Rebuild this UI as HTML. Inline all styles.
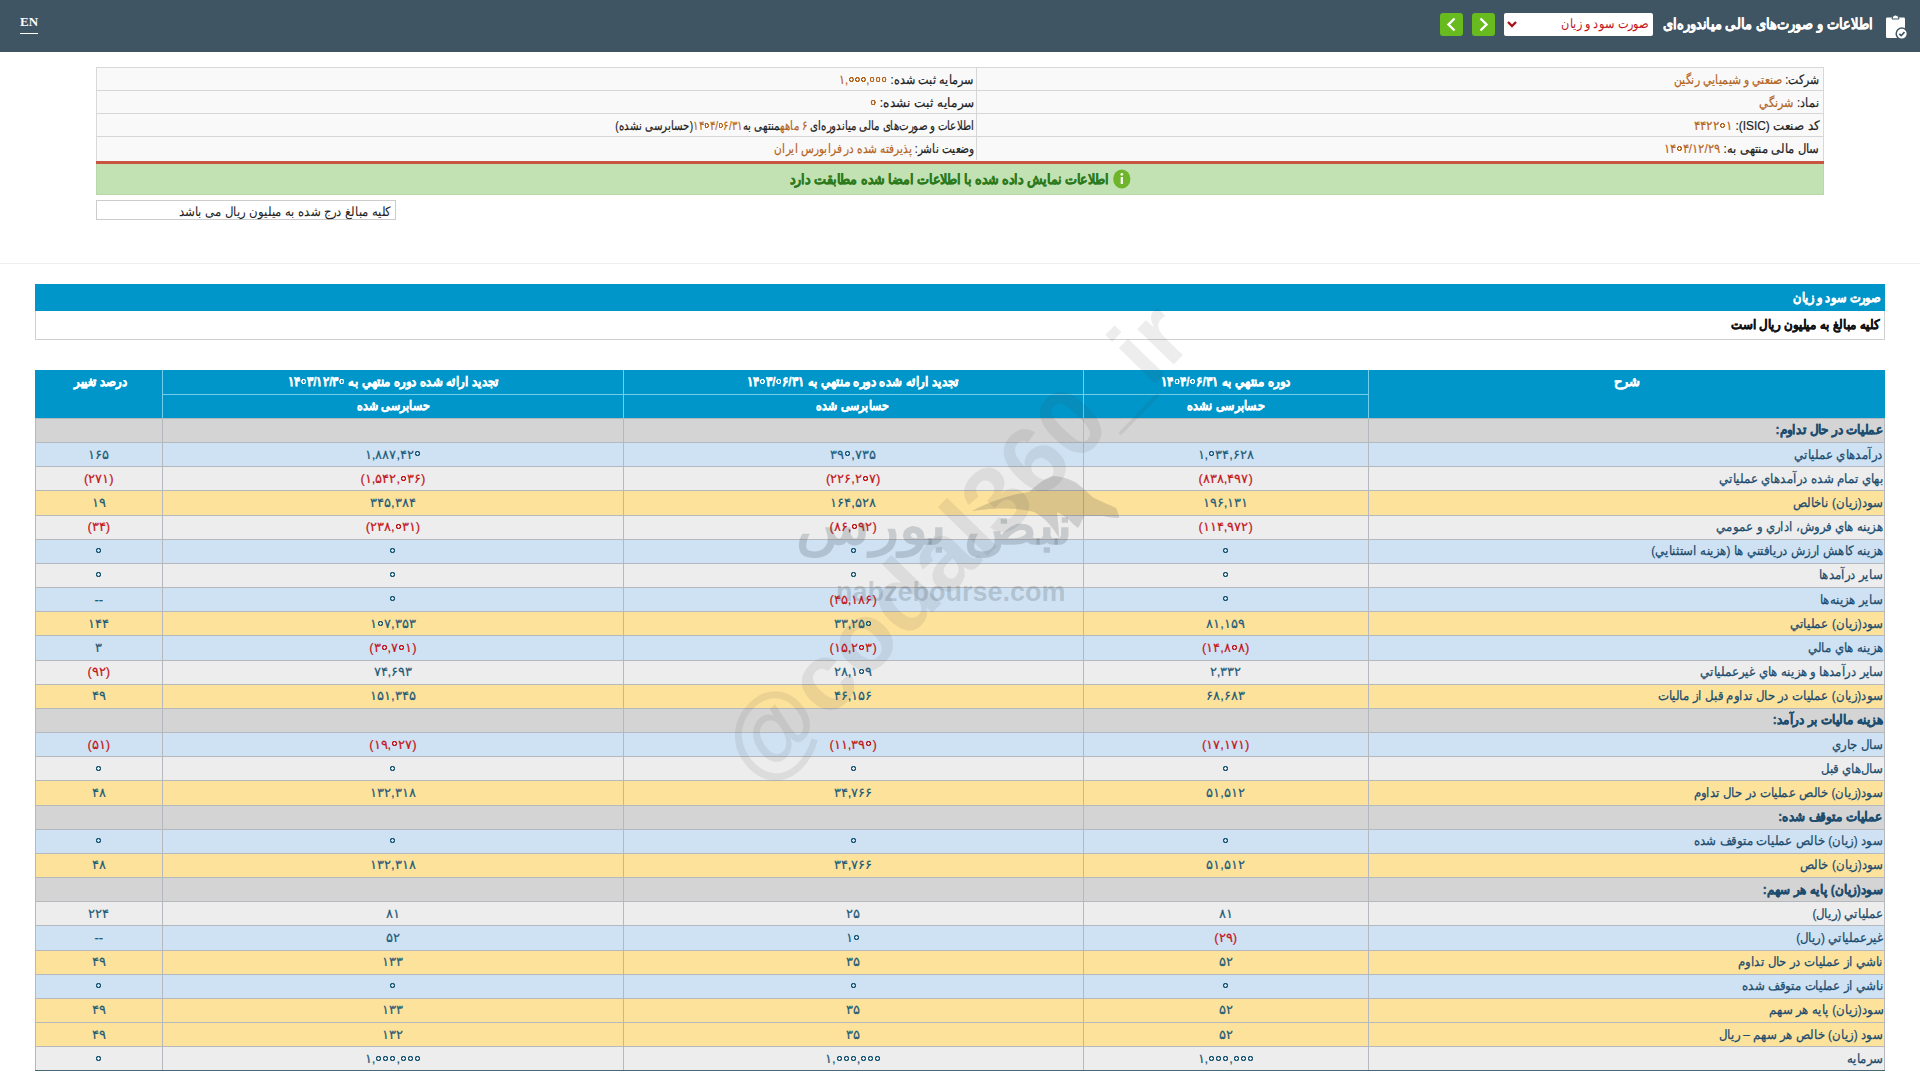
<!DOCTYPE html>
<html lang="fa" dir="rtl">
<head>
<meta charset="utf-8">
<title>صورت سود و زیان</title>
<style>
*{box-sizing:border-box;margin:0;padding:0}
html,body{width:1920px;height:1080px;overflow:hidden;background:#fff;font-family:"Liberation Sans",sans-serif;color:#333}
.abs{position:absolute}
#hdr{position:absolute;left:0;top:0;width:1920px;height:52px;background:#3f5563}
#en{position:absolute;left:20px;top:14.5px;color:#fff;font-family:"Liberation Serif",serif;font-weight:bold;font-size:13px;line-height:14px;border-bottom:1.2px solid #fff;padding-bottom:4px;direction:ltr}
#title{position:absolute;right:47px;top:13px;-webkit-text-stroke:0.3px #fff;transform:scaleX(0.864);transform-origin:100% 50%;color:#fff;font-size:15px;font-weight:bold;line-height:22px;white-space:nowrap}
#sel{position:absolute;left:1504px;top:13px;width:149px;height:23px;background:#fff;border-radius:2px}
#sel span{position:absolute;right:4.5px;transform:scaleX(0.87);transform-origin:100% 50%;top:2px;color:#c0141c;font-size:13px;line-height:18px;white-space:nowrap}
#sel svg{position:absolute;left:2.5px;top:8px}
.gb{position:absolute;top:13px;width:23px;height:23px;background:#67bb1f;border-radius:3px}
.gb svg{position:absolute;left:6px;top:4px}
#icon{position:absolute;left:1885px;top:14px}

#info{position:absolute;left:96px;top:67px;width:1728px;height:95px;background:#f9f9f9;border:1px solid #d8d8d8}
.ir{position:absolute;height:23px;border-bottom:1px solid #d6d6d6;font-size:13px;line-height:24px;color:#222;white-space:nowrap}
.ir{-webkit-text-stroke:0.2px currentColor}
.ir .v{color:#b5651d}
.ir span.t{display:inline-block;transform-origin:100% 50%}
#redl{position:absolute;left:96px;top:161px;width:1728px;height:3px;background:#c8553f}
#green{position:absolute;left:96px;top:164px;width:1728px;height:31px;background:#c2e2b4;border:1px solid #b9d8aa;border-top:0}
#green .t{position:absolute;left:0;width:100%;top:5px;transform:scaleX(0.909);text-align:center;color:#2c7a1c;font-weight:bold;font-size:14px;line-height:20px;white-space:nowrap}
#note{position:absolute;left:96px;top:200px;width:300px;height:20px;border:1px solid #ccc;background:#fff;font-size:13px;line-height:21px;padding-right:4.5px;color:#222;white-space:nowrap}
#note span{display:inline-block;transform:scaleX(0.904);transform-origin:100% 50%}
#sep{position:absolute;left:0;top:263px;width:1920px;height:1px;background:#eceff1}

#bar,#unit,.thc,#green .t{-webkit-text-stroke:0.35px currentColor}
#bar{position:absolute;left:35px;top:284px;width:1850px;height:27px;background:#0096c9;color:#fff;font-weight:bold;font-size:13px;line-height:27px;padding-right:4px}
#bar span,#unit span{display:inline-block;transform-origin:100% 50%}
#unit{position:absolute;left:35px;top:311px;width:1850px;height:29px;background:#fff;border:1px solid #cfcfcf;border-top:0;color:#111;font-weight:bold;font-size:13px;line-height:27px;padding-right:5px}

#th{position:absolute;left:35px;top:370.4px;width:1850px;height:47.2px;background:#0096c9}
.thc{position:absolute;color:#fff;font-weight:bold;font-size:13px;line-height:24px;text-align:center;white-space:nowrap}
.thl{position:absolute;background:#74cdea}
.r{position:absolute;left:35px;width:1850px;height:24.17px}
.hl{position:absolute;left:35px;width:1850px;height:1px;background:#b5b9bd}
.vl{position:absolute;top:417.6px;height:653px;width:1px;background:#b5b9bd}
.lb{position:absolute;right:37px;transform:scaleX(0.905);transform-origin:100% 50%;height:24px;line-height:24px;font-size:13px;color:#1c4c6e;white-space:nowrap}
.lb{-webkit-text-stroke:0.25px currentColor}
.lb.sec{font-weight:bold;-webkit-text-stroke:0.35px currentColor;transform:scaleX(0.918)}
.nm{position:absolute;direction:ltr;height:24px;line-height:24px;font-size:13px;color:#1d5b78;font-weight:normal;-webkit-text-stroke:0.2px currentColor;text-align:center;white-space:nowrap}
.nm.neg{color:#c4161c}
.z{font-style:normal;position:relative;color:transparent}
.z::after{content:"";position:absolute;left:50%;top:50%;width:7px;height:7px;margin:-3.7px 0 0 -3.5px;border-radius:50%;background:radial-gradient(circle,transparent 0,transparent 1.1px,var(--zc,#1d5b78) 1.5px,var(--zc,#1d5b78) 2.5px,transparent 2.95px)}
.neg .z{--zc:#c4161c}
.thc .z{--zc:#fff}
.ir .v .z{--zc:#b5651d}
.dt{unicode-bidi:isolate;direction:ltr;display:inline-block}
#tbot{position:absolute;left:35px;top:1070px;width:1850px;height:1.4px;background:#48687a}
#tl{position:absolute;left:35px;top:417.6px;width:1px;height:653px;background:#b5b9bd}
#tr{position:absolute;left:1884px;top:417.6px;width:1px;height:653px;background:#b5b9bd}
.wm{position:absolute;pointer-events:none}
</style>
</head>
<body>
<div id="hdr">
  <div id="en">EN</div>
  <div class="gb" style="left:1440px"><svg width="11" height="15" viewBox="0 0 11 15"><path d="M8.5 1.5 L2.5 7.5 L8.5 13.5" fill="none" stroke="#fff" stroke-width="2.4"/></svg></div>
  <div class="gb" style="left:1472px"><svg width="11" height="15" viewBox="0 0 11 15"><path d="M2.5 1.5 L8.5 7.5 L2.5 13.5" fill="none" stroke="#fff" stroke-width="2.4"/></svg></div>
  <div id="sel"><svg width="10" height="7" viewBox="0 0 10 7"><path d="M1 1 L5 5 L9 1" fill="none" stroke="#a5141a" stroke-width="2.4"/></svg><span>صورت سود و زیان</span></div>
  <div id="title">اطلاعات و صورت‌های مالی میاندوره‌ای</div>
  <svg id="icon" width="24" height="26" viewBox="0 0 24 26">
    <rect x="1" y="3.5" width="19" height="20.5" rx="1.2" fill="#fff"/>
    <path d="M7 5 Q7 1 10.5 1 Q14 1 14 5 Z" fill="#fff" stroke="#3f5563" stroke-width="1"/>
    <circle cx="16.8" cy="19.7" r="5.6" fill="#fff" stroke="#3f5563" stroke-width="1.5"/>
    <path d="M14.3 19.8 L16.2 21.6 L19.5 18.1" fill="none" stroke="#3f5563" stroke-width="1.6"/>
  </svg>
</div>

<div id="info">
  <div class="ir" style="right:0;top:0;width:847px;border-left:1px solid #d6d6d6;padding-right:4px"><span class="t" style="transform:scaleX(0.834)">شرکت: <span class="v">صنعتي و شيميايي رنگين</span></span></div>
  <div class="ir" style="right:0;top:23px;width:847px;border-left:1px solid #d6d6d6;padding-right:4px"><span class="t" style="transform:scaleX(0.866)">نماد: <span class="v">شرنگي</span></span></div>
  <div class="ir" style="right:0;top:46px;width:847px;border-left:1px solid #d6d6d6;padding-right:4px"><span class="t" style="transform:scaleX(0.915)">کد صنعت (ISIC): <span class="v"><span class="dt">۴۴۲۲<i class="z">۰</i>۱</span></span></span></div>
  <div class="ir" style="right:0;top:69px;width:847px;border-left:1px solid #d6d6d6;padding-right:4px;border-bottom:0"><span class="t" style="transform:scaleX(0.892)">سال مالی منتهی به: <span class="v"><span class="dt">۱۴<i class="z">۰</i>۴/۱۲/۲۹</span></span></span></div>
  <div class="ir" style="left:0;top:0;width:879px;padding-right:2px"><span class="t" style="transform:scaleX(0.86)">سرمایه ثبت شده: <span class="v"><span class="dt">۱,<i class="z">۰</i><i class="z">۰</i><i class="z">۰</i>,<i class="z">۰</i><i class="z">۰</i><i class="z">۰</i></span></span></span></div>
  <div class="ir" style="left:0;top:23px;width:879px;padding-right:2px"><span class="t" style="transform:scaleX(0.93)">سرمایه ثبت نشده: <span class="v"><span class="dt"><i class="z">۰</i></span></span></span></div>
  <div class="ir" style="left:0;top:46px;width:879px;padding-right:2px"><span class="t" style="transform:scaleX(0.785)">اطلاعات و صورت‌های مالی میاندوره‌ای <span class="v">۶ ماهه</span>منتهی به<span class="v"><span class="dt">۱۴<i class="z">۰</i>۴/<i class="z">۰</i>۶/۳۱</span></span>(حسابرسی نشده)</span></div>
  <div class="ir" style="left:0;top:69px;width:879px;padding-right:2px;border-bottom:0"><span class="t" style="transform:scaleX(0.812)">وضعیت ناشر: <span class="v">پذیرفته شده در فرابورس ایران</span></span></div>
</div>
<div id="redl"></div>
<div id="green"><div class="t"><svg width="20" height="20" viewBox="0 0 20 20" style="vertical-align:-5px;margin-left:4px"><circle cx="10" cy="10" r="9.5" fill="#6fb52c"/><rect x="8.8" y="8" width="2.4" height="7" fill="#fff"/><circle cx="10" cy="5.3" r="1.4" fill="#fff"/></svg>اطلاعات نمایش داده شده با اطلاعات امضا شده مطابقت دارد</div></div>
<div id="note"><span>کلیه مبالغ درج شده به میلیون ریال می باشد</span></div>
<div id="sep"></div>

<div id="bar"><span style="transform:scaleX(0.87)">صورت سود و زیان</span></div>
<div id="unit"><span style="transform:scaleX(0.91)">کلیه مبالغ به میلیون ریال است</span></div>

<div id="th">
  <div class="thc" style="left:1333.3px;width:517px;top:0">شرح</div>
  <div class="thc" style="left:1048px;width:285.3px;top:0;transform:scaleX(0.914)">دوره منتهي به <span class="dt">۱۴<i class="z">۰</i>۴/<i class="z">۰</i>۶/۳۱</span></div>
  <div class="thc" style="left:1048px;width:285.3px;top:24px;transform:scaleX(0.861)">حسابرسی نشده</div>
  <div class="thc" style="left:588.3px;width:459.7px;top:0;transform:scaleX(0.911)">تجدید ارائه شده دوره منتهي به <span class="dt">۱۴<i class="z">۰</i>۳/<i class="z">۰</i>۶/۳۱</span></div>
  <div class="thc" style="left:588.3px;width:459.7px;top:24px;transform:scaleX(0.85)">حسابرسی شده</div>
  <div class="thc" style="left:127.5px;width:460.8px;top:0;transform:scaleX(0.907)">تجدید ارائه شده دوره منتهي به <span class="dt">۱۴<i class="z">۰</i>۳/۱۲/۳<i class="z">۰</i></span></div>
  <div class="thc" style="left:127.5px;width:460.8px;top:24px;transform:scaleX(0.85)">حسابرسی شده</div>
  <div class="thc" style="left:1.6px;width:127.5px;top:0;transform:scaleX(0.9)">درصد تغییر</div>
  <div class="thl" style="left:127px;top:0;width:1px;height:47.2px"></div>
  <div class="thl" style="left:588px;top:0;width:1px;height:47.2px"></div>
  <div class="thl" style="left:1048px;top:0;width:1px;height:47.2px"></div>
  <div class="thl" style="left:1333px;top:0;width:1px;height:47.2px"></div>
  <div class="thl" style="left:127px;top:23.5px;width:1206px;height:1px"></div>
</div>

<div class="r" style="top:418.40px;background:#d4d4d4"></div>
<div class="lb sec" style="top:418.40px">عمليات در حال تداوم:</div>
<div class="r" style="top:442.57px;background:#cfe2f3"></div>
<div class="lb" style="top:442.57px">درآمدهاي عملياتي</div>
<div class="nm" style="top:442.57px;left:1083.0px;width:285.3px">۱,<i class="z">۰</i>۳۴,۶۲۸</div>
<div class="nm" style="top:442.57px;left:623.3px;width:459.7px">۳۹<i class="z">۰</i>,۷۳۵</div>
<div class="nm" style="top:442.57px;left:162.5px;width:460.8px">۱,۸۸۷,۴۲<i class="z">۰</i></div>
<div class="nm" style="top:442.57px;left:35.0px;width:127.5px">۱۶۵</div>
<div class="r" style="top:466.74px;background:#ededed"></div>
<div class="lb" style="top:466.74px">بهاي تمام شده درآمدهاي عملياتي</div>
<div class="nm neg" style="top:466.74px;left:1083.0px;width:285.3px">(۸۳۸,۴۹۷)</div>
<div class="nm neg" style="top:466.74px;left:623.3px;width:459.7px">(۲۲۶,۲<i class="z">۰</i>۷)</div>
<div class="nm neg" style="top:466.74px;left:162.5px;width:460.8px">(۱,۵۴۲,<i class="z">۰</i>۳۶)</div>
<div class="nm neg" style="top:466.74px;left:35.0px;width:127.5px">(۲۷۱)</div>
<div class="r" style="top:490.91px;background:#fde29c"></div>
<div class="lb" style="top:490.91px">سود(زيان) ناخالص</div>
<div class="nm" style="top:490.91px;left:1083.0px;width:285.3px">۱۹۶,۱۳۱</div>
<div class="nm" style="top:490.91px;left:623.3px;width:459.7px">۱۶۴,۵۲۸</div>
<div class="nm" style="top:490.91px;left:162.5px;width:460.8px">۳۴۵,۳۸۴</div>
<div class="nm" style="top:490.91px;left:35.0px;width:127.5px">۱۹</div>
<div class="r" style="top:515.08px;background:#ededed"></div>
<div class="lb" style="top:515.08px">هزينه هاي فروش، اداري و عمومي</div>
<div class="nm neg" style="top:515.08px;left:1083.0px;width:285.3px">(۱۱۴,۹۷۲)</div>
<div class="nm neg" style="top:515.08px;left:623.3px;width:459.7px">(۸۶,<i class="z">۰</i>۹۲)</div>
<div class="nm neg" style="top:515.08px;left:162.5px;width:460.8px">(۲۳۸,<i class="z">۰</i>۳۱)</div>
<div class="nm neg" style="top:515.08px;left:35.0px;width:127.5px">(۳۴)</div>
<div class="r" style="top:539.25px;background:#cfe2f3"></div>
<div class="lb" style="top:539.25px">هزينه كاهش ارزش دريافتني ها (هزينه استثنايي)</div>
<div class="nm" style="top:539.25px;left:1083.0px;width:285.3px"><i class="z">۰</i></div>
<div class="nm" style="top:539.25px;left:623.3px;width:459.7px"><i class="z">۰</i></div>
<div class="nm" style="top:539.25px;left:162.5px;width:460.8px"><i class="z">۰</i></div>
<div class="nm" style="top:539.25px;left:35.0px;width:127.5px"><i class="z">۰</i></div>
<div class="r" style="top:563.42px;background:#ededed"></div>
<div class="lb" style="top:563.42px">ساير درآمدها</div>
<div class="nm" style="top:563.42px;left:1083.0px;width:285.3px"><i class="z">۰</i></div>
<div class="nm" style="top:563.42px;left:623.3px;width:459.7px"><i class="z">۰</i></div>
<div class="nm" style="top:563.42px;left:162.5px;width:460.8px"><i class="z">۰</i></div>
<div class="nm" style="top:563.42px;left:35.0px;width:127.5px"><i class="z">۰</i></div>
<div class="r" style="top:587.59px;background:#cfe2f3"></div>
<div class="lb" style="top:587.59px">ساير هزينه‌ها</div>
<div class="nm" style="top:587.59px;left:1083.0px;width:285.3px"><i class="z">۰</i></div>
<div class="nm neg" style="top:587.59px;left:623.3px;width:459.7px">(۴۵,۱۸۶)</div>
<div class="nm" style="top:587.59px;left:162.5px;width:460.8px"><i class="z">۰</i></div>
<div class="nm" style="top:587.59px;left:35.0px;width:127.5px">--</div>
<div class="r" style="top:611.76px;background:#fde29c"></div>
<div class="lb" style="top:611.76px">سود(زيان) عملياتي</div>
<div class="nm" style="top:611.76px;left:1083.0px;width:285.3px">۸۱,۱۵۹</div>
<div class="nm" style="top:611.76px;left:623.3px;width:459.7px">۳۳,۲۵<i class="z">۰</i></div>
<div class="nm" style="top:611.76px;left:162.5px;width:460.8px">۱<i class="z">۰</i>۷,۳۵۳</div>
<div class="nm" style="top:611.76px;left:35.0px;width:127.5px">۱۴۴</div>
<div class="r" style="top:635.93px;background:#cfe2f3"></div>
<div class="lb" style="top:635.93px">هزينه هاي مالي</div>
<div class="nm neg" style="top:635.93px;left:1083.0px;width:285.3px">(۱۴,۸<i class="z">۰</i>۸)</div>
<div class="nm neg" style="top:635.93px;left:623.3px;width:459.7px">(۱۵,۲<i class="z">۰</i>۳)</div>
<div class="nm neg" style="top:635.93px;left:162.5px;width:460.8px">(۳<i class="z">۰</i>,۷<i class="z">۰</i>۱)</div>
<div class="nm" style="top:635.93px;left:35.0px;width:127.5px">۳</div>
<div class="r" style="top:660.10px;background:#ededed"></div>
<div class="lb" style="top:660.10px">ساير درآمدها و هزينه هاي غيرعملياتي</div>
<div class="nm" style="top:660.10px;left:1083.0px;width:285.3px">۲,۳۳۲</div>
<div class="nm" style="top:660.10px;left:623.3px;width:459.7px">۲۸,۱<i class="z">۰</i>۹</div>
<div class="nm" style="top:660.10px;left:162.5px;width:460.8px">۷۴,۶۹۳</div>
<div class="nm neg" style="top:660.10px;left:35.0px;width:127.5px">(۹۲)</div>
<div class="r" style="top:684.27px;background:#fde29c"></div>
<div class="lb" style="top:684.27px">سود(زيان) عمليات در حال تداوم قبل از ماليات</div>
<div class="nm" style="top:684.27px;left:1083.0px;width:285.3px">۶۸,۶۸۳</div>
<div class="nm" style="top:684.27px;left:623.3px;width:459.7px">۴۶,۱۵۶</div>
<div class="nm" style="top:684.27px;left:162.5px;width:460.8px">۱۵۱,۳۴۵</div>
<div class="nm" style="top:684.27px;left:35.0px;width:127.5px">۴۹</div>
<div class="r" style="top:708.44px;background:#d4d4d4"></div>
<div class="lb sec" style="top:708.44px">هزينه ماليات بر درآمد:</div>
<div class="r" style="top:732.61px;background:#cfe2f3"></div>
<div class="lb" style="top:732.61px">سال جاري</div>
<div class="nm neg" style="top:732.61px;left:1083.0px;width:285.3px">(۱۷,۱۷۱)</div>
<div class="nm neg" style="top:732.61px;left:623.3px;width:459.7px">(۱۱,۳۹<i class="z">۰</i>)</div>
<div class="nm neg" style="top:732.61px;left:162.5px;width:460.8px">(۱۹,<i class="z">۰</i>۲۷)</div>
<div class="nm neg" style="top:732.61px;left:35.0px;width:127.5px">(۵۱)</div>
<div class="r" style="top:756.78px;background:#ededed"></div>
<div class="lb" style="top:756.78px">سال‌هاي قبل</div>
<div class="nm" style="top:756.78px;left:1083.0px;width:285.3px"><i class="z">۰</i></div>
<div class="nm" style="top:756.78px;left:623.3px;width:459.7px"><i class="z">۰</i></div>
<div class="nm" style="top:756.78px;left:162.5px;width:460.8px"><i class="z">۰</i></div>
<div class="nm" style="top:756.78px;left:35.0px;width:127.5px"><i class="z">۰</i></div>
<div class="r" style="top:780.95px;background:#fde29c"></div>
<div class="lb" style="top:780.95px">سود(زيان) خالص عمليات در حال تداوم</div>
<div class="nm" style="top:780.95px;left:1083.0px;width:285.3px">۵۱,۵۱۲</div>
<div class="nm" style="top:780.95px;left:623.3px;width:459.7px">۳۴,۷۶۶</div>
<div class="nm" style="top:780.95px;left:162.5px;width:460.8px">۱۳۲,۳۱۸</div>
<div class="nm" style="top:780.95px;left:35.0px;width:127.5px">۴۸</div>
<div class="r" style="top:805.12px;background:#d4d4d4"></div>
<div class="lb sec" style="top:805.12px">عمليات متوقف شده:</div>
<div class="r" style="top:829.29px;background:#cfe2f3"></div>
<div class="lb" style="top:829.29px">سود (زيان) خالص عمليات متوقف شده</div>
<div class="nm" style="top:829.29px;left:1083.0px;width:285.3px"><i class="z">۰</i></div>
<div class="nm" style="top:829.29px;left:623.3px;width:459.7px"><i class="z">۰</i></div>
<div class="nm" style="top:829.29px;left:162.5px;width:460.8px"><i class="z">۰</i></div>
<div class="nm" style="top:829.29px;left:35.0px;width:127.5px"><i class="z">۰</i></div>
<div class="r" style="top:853.46px;background:#fde29c"></div>
<div class="lb" style="top:853.46px">سود(زيان) خالص</div>
<div class="nm" style="top:853.46px;left:1083.0px;width:285.3px">۵۱,۵۱۲</div>
<div class="nm" style="top:853.46px;left:623.3px;width:459.7px">۳۴,۷۶۶</div>
<div class="nm" style="top:853.46px;left:162.5px;width:460.8px">۱۳۲,۳۱۸</div>
<div class="nm" style="top:853.46px;left:35.0px;width:127.5px">۴۸</div>
<div class="r" style="top:877.63px;background:#d4d4d4"></div>
<div class="lb sec" style="top:877.63px">سود(زيان) پايه هر سهم:</div>
<div class="r" style="top:901.80px;background:#ededed"></div>
<div class="lb" style="top:901.80px">عملياتي (ريال)</div>
<div class="nm" style="top:901.80px;left:1083.0px;width:285.3px">۸۱</div>
<div class="nm" style="top:901.80px;left:623.3px;width:459.7px">۲۵</div>
<div class="nm" style="top:901.80px;left:162.5px;width:460.8px">۸۱</div>
<div class="nm" style="top:901.80px;left:35.0px;width:127.5px">۲۲۴</div>
<div class="r" style="top:925.97px;background:#cfe2f3"></div>
<div class="lb" style="top:925.97px">غيرعملياتي (ريال)</div>
<div class="nm neg" style="top:925.97px;left:1083.0px;width:285.3px">(۲۹)</div>
<div class="nm" style="top:925.97px;left:623.3px;width:459.7px">۱<i class="z">۰</i></div>
<div class="nm" style="top:925.97px;left:162.5px;width:460.8px">۵۲</div>
<div class="nm" style="top:925.97px;left:35.0px;width:127.5px">--</div>
<div class="r" style="top:950.14px;background:#fde29c"></div>
<div class="lb" style="top:950.14px">ناشي از عمليات در حال تداوم</div>
<div class="nm" style="top:950.14px;left:1083.0px;width:285.3px">۵۲</div>
<div class="nm" style="top:950.14px;left:623.3px;width:459.7px">۳۵</div>
<div class="nm" style="top:950.14px;left:162.5px;width:460.8px">۱۳۳</div>
<div class="nm" style="top:950.14px;left:35.0px;width:127.5px">۴۹</div>
<div class="r" style="top:974.31px;background:#cfe2f3"></div>
<div class="lb" style="top:974.31px">ناشي از عمليات متوقف شده</div>
<div class="nm" style="top:974.31px;left:1083.0px;width:285.3px"><i class="z">۰</i></div>
<div class="nm" style="top:974.31px;left:623.3px;width:459.7px"><i class="z">۰</i></div>
<div class="nm" style="top:974.31px;left:162.5px;width:460.8px"><i class="z">۰</i></div>
<div class="nm" style="top:974.31px;left:35.0px;width:127.5px"><i class="z">۰</i></div>
<div class="r" style="top:998.48px;background:#fde29c"></div>
<div class="lb" style="top:998.48px">سود(زيان) پايه هر سهم</div>
<div class="nm" style="top:998.48px;left:1083.0px;width:285.3px">۵۲</div>
<div class="nm" style="top:998.48px;left:623.3px;width:459.7px">۳۵</div>
<div class="nm" style="top:998.48px;left:162.5px;width:460.8px">۱۳۳</div>
<div class="nm" style="top:998.48px;left:35.0px;width:127.5px">۴۹</div>
<div class="r" style="top:1022.65px;background:#fde29c"></div>
<div class="lb" style="top:1022.65px">سود (زيان) خالص هر سهم – ريال</div>
<div class="nm" style="top:1022.65px;left:1083.0px;width:285.3px">۵۲</div>
<div class="nm" style="top:1022.65px;left:623.3px;width:459.7px">۳۵</div>
<div class="nm" style="top:1022.65px;left:162.5px;width:460.8px">۱۳۲</div>
<div class="nm" style="top:1022.65px;left:35.0px;width:127.5px">۴۹</div>
<div class="r" style="top:1046.82px;background:#ededed"></div>
<div class="lb" style="top:1046.82px">سرمايه</div>
<div class="nm" style="top:1046.82px;left:1083.0px;width:285.3px">۱,<i class="z">۰</i><i class="z">۰</i><i class="z">۰</i>,<i class="z">۰</i><i class="z">۰</i><i class="z">۰</i></div>
<div class="nm" style="top:1046.82px;left:623.3px;width:459.7px">۱,<i class="z">۰</i><i class="z">۰</i><i class="z">۰</i>,<i class="z">۰</i><i class="z">۰</i><i class="z">۰</i></div>
<div class="nm" style="top:1046.82px;left:162.5px;width:460.8px">۱,<i class="z">۰</i><i class="z">۰</i><i class="z">۰</i>,<i class="z">۰</i><i class="z">۰</i><i class="z">۰</i></div>
<div class="nm" style="top:1046.82px;left:35.0px;width:127.5px"><i class="z">۰</i></div>
<div class="hl" style="top:417.90px"></div>
<div class="hl" style="top:442.07px"></div>
<div class="hl" style="top:466.24px"></div>
<div class="hl" style="top:490.41px"></div>
<div class="hl" style="top:514.58px"></div>
<div class="hl" style="top:538.75px"></div>
<div class="hl" style="top:562.92px"></div>
<div class="hl" style="top:587.09px"></div>
<div class="hl" style="top:611.26px"></div>
<div class="hl" style="top:635.43px"></div>
<div class="hl" style="top:659.60px"></div>
<div class="hl" style="top:683.77px"></div>
<div class="hl" style="top:707.94px"></div>
<div class="hl" style="top:732.11px"></div>
<div class="hl" style="top:756.28px"></div>
<div class="hl" style="top:780.45px"></div>
<div class="hl" style="top:804.62px"></div>
<div class="hl" style="top:828.79px"></div>
<div class="hl" style="top:852.96px"></div>
<div class="hl" style="top:877.13px"></div>
<div class="hl" style="top:901.30px"></div>
<div class="hl" style="top:925.47px"></div>
<div class="hl" style="top:949.64px"></div>
<div class="hl" style="top:973.81px"></div>
<div class="hl" style="top:997.98px"></div>
<div class="hl" style="top:1022.15px"></div>
<div class="hl" style="top:1046.32px"></div>
<div class="hl" style="top:1070.49px"></div>
<div class="vl" style="left:162.0px"></div>
<div class="vl" style="left:622.8px"></div>
<div class="vl" style="left:1082.5px"></div>
<div class="vl" style="left:1367.8px"></div>
<div id="tl"></div><div id="tr"></div>
<div id="tbot"></div>

<div class="wm" style="left:953.7px;top:543px;width:0;height:0">
  <div style="position:absolute;left:-310px;top:-55px;width:620px;height:110px;text-align:center;font-family:'Liberation Sans',sans-serif;font-weight:bold;font-size:96px;line-height:110px;color:rgba(60,60,60,0.095);transform:rotate(-45.8deg);white-space:nowrap;direction:ltr">@codal360_ir</div>
</div>
<div class="wm" style="left:836px;top:576px;width:240px;height:32px;font-family:'Liberation Sans',sans-serif;font-weight:bold;font-size:27px;line-height:32px;color:rgba(70,80,90,0.22);direction:ltr;white-space:nowrap">nabzebourse.com</div>
<div class="wm" style="left:797px;top:490px;width:274px;height:70px;font-size:54px;line-height:70px;font-weight:bold;color:rgba(70,80,90,0.22);white-space:nowrap;text-align:center;transform:scaleX(1.12)">نبض بورس</div>
<svg class="wm" style="left:930px;top:470px" width="200" height="95" viewBox="0 0 200 95">
  <path d="M42 41 C55 34 80 24 99 22 C108 14 116 7 124 6 C135 7 145 11 149 15 C155 20 160 25 164 28 C172 32 180 35 186 38 C188 42 189 45 189 48 C184 48 178 47 173 46 L154 46 C152 50 150 55 148 58 L143 54 C138 48 132 44 127 42 C128 52 129 62 129 68 C123 58 116 48 104 42 C90 38 70 37 42 41 Z" fill="rgba(60,60,60,0.18)"/>
</svg>

</body>
</html>
